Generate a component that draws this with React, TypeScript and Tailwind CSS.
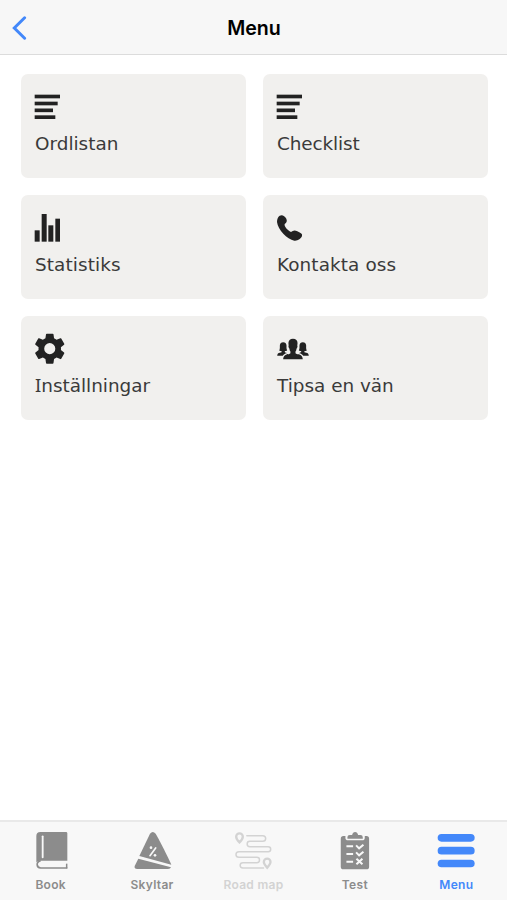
import React from 'react';
import { IoIosPeople } from 'react-icons/io';

const LinesIcon = () => (
  <svg viewBox="57 75 108 108" className="w-9 h-9" fill="currentColor">
    <rect x="59" y="89" width="76" height="11" />
    <rect x="59" y="110" width="69" height="11" />
    <rect x="59" y="130.500" width="55" height="11" />
    <rect x="59" y="151" width="62" height="11" />
  </svg>
);

const StatsIcon = () => (
  <svg viewBox="57 63 108 108" className="w-9 h-9" fill="currentColor">
    <rect x="59" y="121" width="15" height="34" />
    <rect x="80" y="72" width="15" height="83" />
    <rect x="100" y="106" width="15" height="49" />
    <rect x="121" y="86" width="14" height="69" />
  </svg>
);

const PhoneIcon = () => (
  <svg viewBox="63 63 108 108" className="w-9 h-9" fill="currentColor">
    <path d="M74 77c7-4 15 0 20 9c3 7 1 12-5 16c-2 7 8 19 19 24c6-5 12-6 19-2c11 5 16 8 14 14c-3 8-12 15-23 14c-22-4-49-33-52-56c0-9 3-16 8-19z" />
  </svg>
);

const GearIcon = () => (
  <svg viewBox="1.5 0.9 24 24" className="w-9 h-9" fill="currentColor">
    <path
      fillRule="evenodd"
      d="M19.430 12.980c.04-.32.07-.64.07-.98s-.03-.66-.07-.98l2.110-1.650c.19-.15.24-.42.12-.64l-2-3.460c-.12-.22-.39-.3-.61-.22l-2.490 1c-.52-.4-1.080-.73-1.690-.98l-.38-2.650C14.460 2.180 14.250 2 14 2h-4c-.25 0-.46.18-.49.42l-.38 2.650c-.61.25-1.170.59-1.690.98l-2.490-1c-.23-.09-.49 0-.61.22l-2 3.460c-.13.22-.07.49.12.64l2.110 1.650c-.04.32-.07.65-.07.98s.03.66.07.98l-2.110 1.650c-.19.15-.24.42-.12.64l2 3.460c.12.22.39.3.61.22l2.490-1c.52.4 1.080.73 1.690.98l.38 2.650c.03.24.24.42.49.42h4c.25 0 .46-.18.49-.42l.38-2.650c.61-.25 1.170-.59 1.690-.98l2.490 1c.23.09.49 0 .61-.22l2-3.460c.12-.22.07-.49-.12-.64l-2.110-1.650zM12 15.700a3.700 3.700 0 1 1 0-7.400 3.700 3.700 0 0 1 0 7.400z"
    />
  </svg>
);

const BookIcon = () => (
  <svg viewBox="32 48 120 120" className="w-10 h-10">
    <path d="M60 51h77q4 0 4 4v82H58q-6 0-10 5V63q0-12 12-12z" fill="currentColor" />
    <path d="M141 159H61q-10-1-10.500-10t10.500-12" fill="none" stroke="currentColor" strokeWidth="5" />
    <path d="M139 146v14" stroke="currentColor" strokeWidth="4.500" />
    <path d="M67 64v63" stroke="#f8f8f8" strokeWidth="5.500" strokeLinecap="round" />
  </svg>
);

const SignIcon = () => (
  <svg viewBox="36 48 120 120" className="w-10 h-10">
    <path d="M90 56q8-10 17 0q3 4 24 45q20 40 23 48L58 123z" fill="currentColor" />
    <path d="M55 131L153 157q-2 5-9 5H52q-10 0-8-9z" fill="currentColor" />
    <path d="M90 122L107 99" stroke="#f8f8f8" strokeWidth="5" strokeLinecap="round" />
    <circle cx="93" cy="98" r="4" fill="#f8f8f8" />
    <circle cx="105" cy="121" r="4" fill="#f8f8f8" />
  </svg>
);

const RoadIcon = () => (
  <svg viewBox="55.5 48 120 120" className="w-10 h-10" fill="none" stroke="currentColor" strokeWidth="4.500">
    <path
      d="M97 62h48a8 8 0 0 1 0 17h-39a8 8 0 0 0 0 16h55a7.500 7.500 0 0 1 0 15H73a8.500 8.500 0 0 0 0 17h54a8 8 0 0 1 0 16H85a8 8 0 0 0 0 16h62"
      strokeLinecap="round"
    />
    <path d="M75 82C68 75 65 70 65 65a10 10 0 0 1 20 0c0 5-3 10-10 17z" strokeWidth="7" />
    <path d="M158 158c-7-8-10-12-10-17a10 10 0 0 1 20 0c0 5-3 9-10 17z" strokeWidth="7" />
  </svg>
);

const TestIcon = () => (
  <svg viewBox="44.7 48 120 120" className="w-10 h-10">
    <rect x="62" y="63" width="85" height="100" rx="8" fill="currentColor" />
    <path d="M76 60h58v8q0 8-8 8H84q-8 0-8-8z" fill="#f8f8f8" />
    <path d="M82 71v-4q0-7 7-7h7q2-9 9-9t9 9h7q7 0 7 7v4z" fill="currentColor" />
    <g stroke="#f8f8f8" strokeWidth="6" fill="none">
      <path d="M79 94h20M79 117h20M79 140h20" />
      <path d="M108 91l9 9 13-11M108 112l9 9 13-11M109 131l18 17M127 131l-18 17" />
    </g>
  </svg>
);

const MenuIcon = () => (
  <svg viewBox="34 48 120 120" className="w-10 h-10" fill="currentColor">
    <rect x="39" y="57" width="111" height="23" rx="11.500" />
    <rect x="39" y="95.500" width="111" height="23" rx="11.500" />
    <rect x="39" y="134" width="111" height="23" rx="11.500" />
  </svg>
);

const TILES = [
  { label: 'Ordlistan', icon: <LinesIcon />, text: 'mt-1' },
  { label: 'Checklist', icon: <LinesIcon />, text: 'mt-1 tracking-[-0.1px]' },
  { label: 'Statistiks', icon: <StatsIcon />, text: 'mt-1 tracking-[0.1px]' },
  { label: 'Kontakta oss', icon: <PhoneIcon />, text: 'mt-1 tracking-[0.1px]' },
  // serifed capital I
  { label: 'Inställningar', icon: <GearIcon />, text: "mt-[3px] first-letter:font-['Noto_Sans']" },
  { label: 'Tipsa en vän', icon: <IoIosPeople className="w-9 h-9 -mt-px mb-px -ml-px" />, text: 'mt-1' },
];

const TABS = [
  { label: 'Book', icon: <BookIcon />, color: 'text-[#8c8c8c]' },
  { label: 'Skyltar', icon: <SignIcon />, color: 'text-[#8c8c8c]' },
  { label: 'Road map', icon: <RoadIcon />, color: 'text-[#d3d3d3]' },
  { label: 'Test', icon: <TestIcon />, color: 'text-[#8c8c8c]' },
  { label: 'Menu', icon: <MenuIcon />, color: 'text-[#4388fa]' },
];

export default function App() {
  return (
    <div className="h-[900px] w-[507px] flex flex-col bg-white overflow-hidden font-['Inter',sans-serif]">
      <header className="h-[55px] shrink-0 grid grid-cols-[60px_1fr_60px] items-center bg-[#f7f7f7] border-b border-[#dcdcdc]">
        <button className="pl-3 pt-0.5">
          <svg viewBox="0 0 15 24" className="w-[15px] h-6" fill="none" stroke="#4388fa" strokeWidth="3">
            <path d="M12.600 1.800L2.300 12l10.300 10.200" strokeLinecap="round" />
          </svg>
        </button>
        <h1 className="pt-[3px] pl-px text-center text-[19.6px] font-semibold text-black">Menu</h1>
      </header>

      <main className="flex-1 grid grid-cols-2 auto-rows-[104px] gap-[17px] pt-[19px] pl-[21px] pr-[19px]">
        {TILES.map(tile => (
          <button
            key={tile.label}
            className="rounded-[7px] bg-[#f1f0ee] pl-[13px] pt-4 flex flex-col items-start text-[#222]"
          >
            {tile.icon}
            <span
              className={`ml-px block h-7 leading-7 text-[18.4px] whitespace-nowrap text-[#3a3a3a] font-['DejaVu_Sans',sans-serif] ${tile.text}`}
            >
              {tile.label}
            </span>
          </button>
        ))}
      </main>

      <nav className="h-20 shrink-0 grid grid-cols-5 bg-[#f8f8f8] border-t-2 border-[#e9e9e9]">
        {TABS.map(tab => (
          <button key={tab.label} className={`flex flex-col items-center pt-[9px] ${tab.color}`}>
            {tab.icon}
            <span className="mt-1.5 text-[12px] leading-4 font-semibold tracking-[0.3px]">{tab.label}</span>
          </button>
        ))}
      </nav>
    </div>
  );
}
